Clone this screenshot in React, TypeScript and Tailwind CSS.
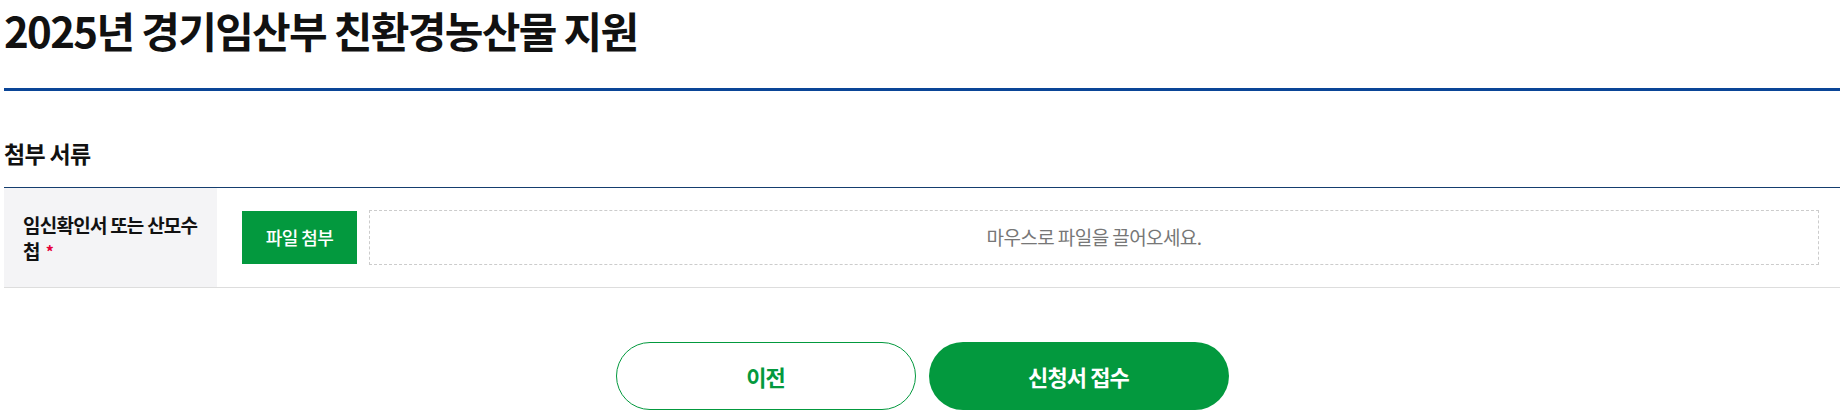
import React from "react";

const font = "font-['Noto_Sans_CJK_KR',_'Noto_Sans',_sans-serif]";

function AttachRow() {
    return (
        <div className="flex border-t border-[#153e6f] border-b border-b-[#dddddd]">
            <div className="w-[213px] shrink-0 bg-[#f4f4f6] flex items-center pl-[19px]">
                <span className="text-[19px] leading-[26px] font-bold tracking-[-0.04em] text-[#111]">
                    <span className="whitespace-nowrap">임신확인서 또는 산모수</span>
                    <br />첩
                    <span className="ml-[6px] text-[#e60039] text-[16px] align-top">*</span>
                </span>
            </div>
            <div className="flex-1 flex items-center gap-3 pl-[25px] pr-[21px] py-[22px]">
                <button
                    type="button"
                    className="w-[115px] h-[53px] shrink-0 bg-[#03993e] text-white text-[18px] font-medium tracking-[-0.03em]"
                >
                    파일 첨부
                </button>
                <div className="flex-1 h-[55px] border border-dashed border-[#cccccc] flex items-center justify-center text-[19px] text-[#777] tracking-[-0.03em]">
                    마우스로 파일을 끌어오세요.
                </div>
            </div>
        </div>
    );
}

export default function App() {
    return (
        <div className={`${font} bg-white min-h-[413px] pl-1 text-[#111]`}>
            <h1 className="h-[88px] pt-[1px] text-[42px] leading-[58px] font-bold tracking-[-0.04em]">
                2025년 경기임산부 친환경농산물 지원
            </h1>
            <div className="h-[3px] bg-[#0a4597]" />

            <h2 className="h-[96px] pt-[47px] text-[23px] leading-[30px] font-bold tracking-[-0.03em]">
                첨부 서류
            </h2>
            <AttachRow />

            <div className="flex justify-center gap-[13px] mt-[54px]">
                <button
                    type="button"
                    className="w-[300px] h-[68px] rounded-full border border-[#03993e] bg-white text-[#03993e] text-[22px] font-bold tracking-[-0.04em]"
                >
                    이전
                </button>
                <button
                    type="button"
                    className="w-[300px] h-[68px] rounded-full bg-[#03993e] text-white text-[22px] font-bold tracking-[-0.04em]"
                >
                    신청서 접수
                </button>
            </div>
        </div>
    );
}
